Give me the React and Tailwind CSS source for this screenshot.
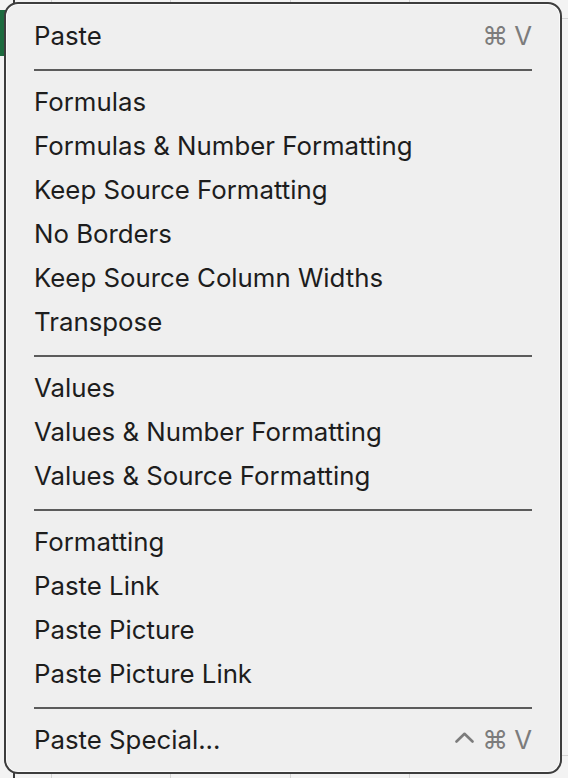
import React from 'react';

const Control = () => (
    <svg width="19" height="11" viewBox="0 0 19 11" className="mb-[6px] mr-[2px]">
        <polyline points="1.5,9.5 9.5,1.8 17.5,9.5" fill="none" stroke="#7c7c7c" strokeWidth="2.6" strokeLinecap="round" strokeLinejoin="round" />
    </svg>
);

const sections = [
    [{ label: 'Paste', keys: ['⌘', 'V'] }],
    [
        { label: 'Formulas' },
        { label: 'Formulas & Number Formatting' },
        { label: 'Keep Source Formatting' },
        { label: 'No Borders' },
        { label: 'Keep Source Column Widths' },
        { label: 'Transpose' },
    ],
    [
        { label: 'Values' },
        { label: 'Values & Number Formatting' },
        { label: 'Values & Source Formatting' },
    ],
    [
        { label: 'Formatting' },
        { label: 'Paste Link' },
        { label: 'Paste Picture' },
        { label: 'Paste Picture Link' },
    ],
    [{ label: 'Paste Special...', keys: ['ctrl', '⌘', 'V'] }],
];

const MenuItem = ({ label, keys }) => (
    <div className="flex h-[44px] items-center justify-between">
        <span className="mb-[1px] text-[#1d1d1d]">{label}</span>
        {keys && (
            <span className="mb-[1px] flex items-center gap-[6px] text-[#7c7c7c]">
                {keys.map((k, i) => (k === 'ctrl' ? <Control key={i} /> : <span key={i}>{k}</span>))}
            </span>
        )}
    </div>
);

export default function App() {
    return (
        <div className="relative h-[778px] w-[568px] overflow-hidden bg-[#f3f3f3]">
            {/* spreadsheet behind the menu */}
            <div className="flex h-full">
                <div className="w-[15px] border-r-2 border-[#3a3a3a]" />
                <div className="w-[37px] border-r border-[#d4d4d4]" />
                <div className="w-[119px] border-r border-[#d4d4d4]" />
                <div className="w-[120px] border-r border-[#d4d4d4]" />
                <div className="w-[119px] border-r border-[#d4d4d4]" />
                <div className="flex-1" />
            </div>
            <div className="absolute left-0 top-[10px] h-[46px] w-[6px] bg-[#1d6b3f]" />
            <div className="absolute right-0 top-[18px] h-px w-[10px] bg-[#d4d4d4]" />
            <div className="absolute right-0 top-[755px] h-px w-[10px] bg-[#d4d4d4]" />

            {/* context menu */}
            <div
                className="absolute left-[4px] top-[2px] flex h-[772px] w-[558px] flex-col rounded-[14px] border-2 border-[#3d3d3d] bg-[#efefef] px-[28px] pb-[9px] pt-[11px] text-[25.8px] shadow-[inset_0_0_0_1px_rgba(255,255,255,0.7)]"
                style={{ fontFamily: 'Inter, "Noto Sans", sans-serif' }}
            >
                {sections.map((items, si) => (
                    <div key={si}>
                        {si > 0 && <div className="my-[10px] h-[2px] bg-[#5b5b5b]" />}
                        {items.map((item) => (
                            <MenuItem key={item.label} {...item} />
                        ))}
                    </div>
                ))}
            </div>
        </div>
    );
}
